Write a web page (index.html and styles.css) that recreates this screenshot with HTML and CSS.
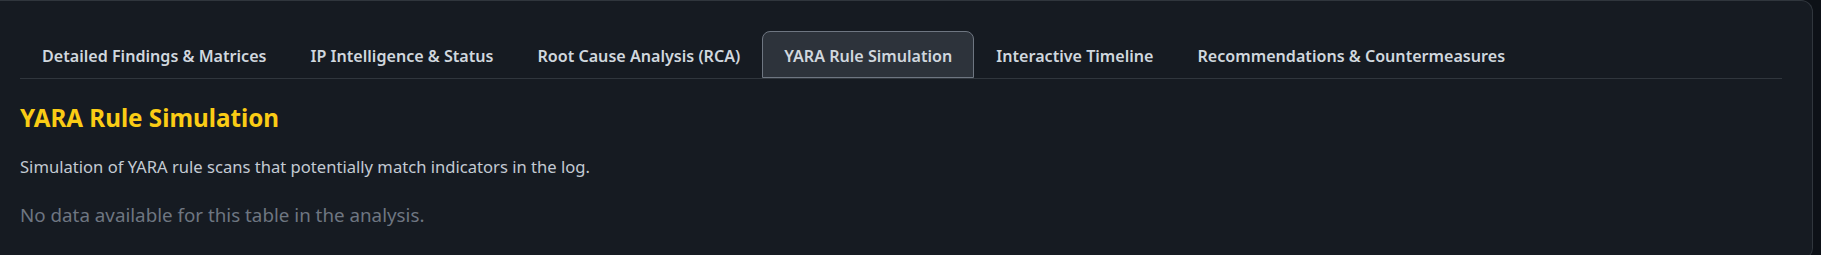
FILE: index.html
```html
<!DOCTYPE html>
<html lang="en">
<head>
    <meta charset="UTF-8">
    <meta name="viewport" content="width=device-width, initial-scale=1.0">
    <title>Analysis Report</title>
    <link rel="stylesheet" href="styles.css">
</head>
<body>

    <div class="card">
        <div class="tabs">
            <button class="tab">Detailed Findings &amp; Matrices</button>
            <button class="tab">IP Intelligence &amp; Status</button>
            <button class="tab">Root Cause Analysis (RCA)</button>
            <button class="tab active">YARA Rule Simulation</button>
            <button class="tab">Interactive Timeline</button>
            <button class="tab">Recommendations &amp; Countermeasures</button>
        </div>

        <div class="panel">
            <h2>YARA Rule Simulation</h2>
            <p class="desc">Simulation of YARA rule scans that potentially match indicators in the log.</p>
            <p class="empty">No data available for this table in the analysis.</p>
        </div>
    </div>

</body>
</html>
```
FILE: styles.css
```css
body {
    margin: 0 8px 0 0;
    background-color: #0d1117;
    font-family: "Noto Sans", "Open Sans", sans-serif;
    overflow: hidden;
}
/* Tarjeta principal */
.card {
    background-color: #161b22;
    border: 1px solid #30363d;
    border-left: none;
    border-radius: 0 12px 12px 0;
    padding: 30px 30px 30px 20px;
}
/* Barra de pestañas */
.tabs {
    display: flex;
    border-bottom: 1px solid #30363d;
}
.tab {
    font-family: inherit;
    font-size: 16.1px;
    font-weight: 600;
    line-height: 22px;
    color: #d0d7de;
    background: none;
    border: 1px solid transparent;
    border-radius: 8px 8px 0 0;
    padding: 13px 21px 10px;
    cursor: pointer;
    white-space: nowrap;
}
.tab:hover {
    color: #ffffff;
}
.tab.active {
    background-color: #2d333b;
    border-color: #6e7681;
    color: #d0d7de;
}
/* Contenido de la pestaña */
.panel h2 {
    margin: 24px 0 0;
    font-size: 24.2px;
    font-weight: 700;
    line-height: 1.2;
    color: #facc15;
}
.desc {
    margin: 23px 0 0;
    font-size: 16.6px;
    line-height: 1.5;
    color: #c3cad3;
}
.empty {
    margin: 21px 0 0;
    font-size: 18.8px;
    line-height: 1.5;
    color: #6e7681;
}
```
